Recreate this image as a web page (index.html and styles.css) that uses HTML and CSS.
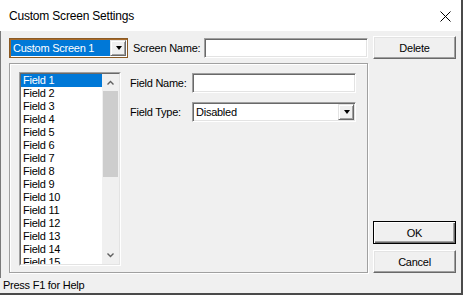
FILE: index.html
```html
<!DOCTYPE html>
<html lang="en">
<head>
  <meta charset="UTF-8" />
  <title>Custom Screen Settings</title>
  <link rel="stylesheet" href="styles.css">
</head>
<body>
  <div class="window">
    <div class="titlebar">
      <span class="title">Custom Screen Settings</span>
      <svg class="close" width="11" height="11" viewBox="0 0 11 11">
        <path d="M0.5 0.5 L10.5 10.5 M10.5 0.5 L0.5 10.5" stroke="#000" stroke-width="1" fill="none"/>
      </svg>
    </div>

    <div class="client">
      <div class="left">
        <div class="toprow">
          <div class="combo screen-combo">
            <span class="combo-value selected">Custom Screen 1</span>
            <span class="drop-btn"><i class="tri"></i></span>
          </div>
          <label class="lbl screen-lbl">Screen Name:</label>
          <div class="edit screen-name"></div>
        </div>

        <div class="panel">
          <div class="listbox">
            <div class="list-inner">
              <ul class="items">
                <li class="sel">Field 1</li>
                <li>Field 2</li>
                <li>Field 3</li>
                <li>Field 4</li>
                <li>Field 5</li>
                <li>Field 6</li>
                <li>Field 7</li>
                <li>Field 8</li>
                <li>Field 9</li>
                <li>Field 10</li>
                <li>Field 11</li>
                <li>Field 12</li>
                <li>Field 13</li>
                <li>Field 14</li>
                <li>Field 15</li>
              </ul>
              <div class="vscroll">
                <span class="arrow">
                  <svg width="7" height="5" viewBox="0 0 7 5"><path d="M0.5 4.5 L3.5 1.5 L6.5 4.5" stroke="#606060" stroke-width="1.4" fill="none"/></svg>
                </span>
                <span class="thumb"></span>
                <span class="arrow down">
                  <svg width="7" height="5" viewBox="0 0 7 5"><path d="M0.5 0.5 L3.5 3.5 L6.5 0.5" stroke="#606060" stroke-width="1.4" fill="none"/></svg>
                </span>
              </div>
            </div>
          </div>

          <div class="props">
            <div class="prop-row">
              <label class="lbl prop-lbl">Field Name:</label>
              <div class="edit prop-edit"></div>
            </div>
            <div class="prop-row">
              <label class="lbl prop-lbl">Field Type:</label>
              <div class="combo prop-edit">
                <span class="combo-value">Disabled</span>
                <span class="drop-btn"><i class="tri"></i></span>
              </div>
            </div>
          </div>
        </div>
      </div>

      <div class="buttons">
        <button class="btn">Delete</button>
        <button class="btn default ok">OK</button>
        <button class="btn cancel">Cancel</button>
      </div>
    </div>

    <div class="statusbar">Press F1 for Help</div>
  </div>
</body>
</html>
```

FILE: styles.css
```css
html, body {
  margin: 0;
  padding: 0;
  background: #f0f0f0;
}

.window {
  width: 463px;
  height: 295px;
  box-sizing: border-box;
  border-right: 2px solid #4a4a4a;
  border-bottom: 2px solid #4a4a4a;
  display: flex;
  flex-direction: column;
  font-family: "Liberation Sans", Arial, sans-serif;
  font-size: 11px;
  letter-spacing: -0.25px;
  color: #000;
}

/* title bar */
.titlebar {
  height: 31px;
  background: #fff;
  display: flex;
  align-items: center;
  padding: 0 10px 0 9px;
}

.title {
  flex: 1;
  font-size: 12px;
  letter-spacing: -0.2px;
  padding-top: 1px;
}

.close {
  margin-top: 1px;
}

/* dialog body */
.client {
  height: 247px;
  box-sizing: border-box;
  border-left: 1px solid #7a7a7a;
  padding: 5px 5px 5px 8px;
  display: flex;
  gap: 5px;
}

.left {
  width: 359px;
  display: flex;
  flex-direction: column;
}

.toprow {
  height: 23px;
  display: flex;
  align-items: center;
}

.lbl {
  white-space: nowrap;
}

.screen-lbl {
  margin: 0 4px 0 5px;
}

.edit {
  height: 20px;
  box-sizing: border-box;
  background: #fff;
  border: 1px solid;
  border-color: #a0a0a0 #fff #fff #a0a0a0;
  box-shadow: inset 1px 1px 0 #696969, inset -1px -1px 0 #e3e3e3;
}

.screen-name {
  flex: 1;
}

/* combo boxes */
.combo {
  height: 20px;
  box-sizing: border-box;
  background: #fff;
  border: 1px solid;
  border-color: #a0a0a0 #fff #fff #a0a0a0;
  box-shadow: inset 1px 1px 0 #696969, inset -1px -1px 0 #e3e3e3;
  display: flex;
  padding: 1px;
}

.screen-combo {
  width: 119px;
  border-color: #8a5a24;
  box-shadow: inset 1px 1px 0 #a86a2a;
}

.combo-value {
  flex: 1;
  padding-left: 2px;
  line-height: 16px;
}

.combo-value.selected {
  background: #0078d7;
  color: #fff;
}

.drop-btn {
  width: 16px;
  box-sizing: border-box;
  background: #f0f0f0;
  border: 1px solid;
  border-color: #e3e3e3 #696969 #696969 #e3e3e3;
  box-shadow: inset 1px 1px 0 #fff, inset -1px -1px 0 #a0a0a0;
  display: flex;
  align-items: center;
  justify-content: center;
}

.tri {
  width: 0;
  height: 0;
  border-left: 3.5px solid transparent;
  border-right: 3.5px solid transparent;
  border-top: 4px solid #000;
  margin-left: 1px;
}

/* group panel */
.panel {
  margin-top: 4px;
  height: 210px;
  box-sizing: border-box;
  border: 1px solid #a0a0a0;
  box-shadow: inset 1px 1px 0 #fff, 1px 1px 0 #fff;
  padding: 8px 0 0 9px;
  display: flex;
}

.listbox {
  width: 102px;
  height: 194px;
  box-sizing: border-box;
  border: 1px solid;
  border-color: #a0a0a0 #fff #fff #a0a0a0;
  display: flex;
}

.list-inner {
  flex: 1;
  display: flex;
  background: #fff;
  border: 1px solid;
  border-color: #696969 #e3e3e3 #e3e3e3 #696969;
  overflow: hidden;
}

.items {
  list-style: none;
  margin: 0;
  padding: 0;
  width: 81px;
}

.items li {
  height: 13px;
  line-height: 13px;
  padding-left: 2px;
  white-space: nowrap;
}

.items li.sel {
  background: #0078d7;
  color: #fff;
}

.vscroll {
  width: 17px;
  background: #f0f0f0;
  display: flex;
  flex-direction: column;
  align-items: center;
}

.arrow {
  height: 17px;
  width: 17px;
  display: flex;
  align-items: center;
  justify-content: center;
}

.arrow.down {
  margin-top: auto;
}

.thumb {
  width: 15px;
  height: 86px;
  background: #cdcdcd;
}

.props {
  margin-left: 9px;
  padding-top: 1px;
  display: flex;
  flex-direction: column;
  gap: 9px;
}

.prop-row {
  display: flex;
  align-items: center;
  height: 20px;
}

.prop-lbl {
  width: 62px;
}

.prop-edit {
  width: 164px;
}

/* push buttons */
.buttons {
  width: 83px;
  display: flex;
  flex-direction: column;
}

.btn {
  height: 23px;
  box-sizing: border-box;
  padding: 0;
  background: #f0f0f0;
  font-family: "Liberation Sans", Arial, sans-serif;
  font-size: 11px;
  letter-spacing: -0.25px;
  color: #000;
  border: 1px solid;
  border-color: #fff #696969 #696969 #fff;
  box-shadow: inset -1px -1px 0 #a0a0a0, inset 1px 1px 0 #e3e3e3;
}

.btn.default {
  border-color: #000;
  box-shadow: inset 1px 1px 0 #fff, inset -1px -1px 0 #696969, inset -2px -2px 0 #a0a0a0;
}

.ok {
  margin-top: auto;
}

.cancel {
  margin-top: 6px;
}

/* status bar */
.statusbar {
  flex: 1;
  padding-left: 3px;
  line-height: 15px;
  white-space: nowrap;
}
```
